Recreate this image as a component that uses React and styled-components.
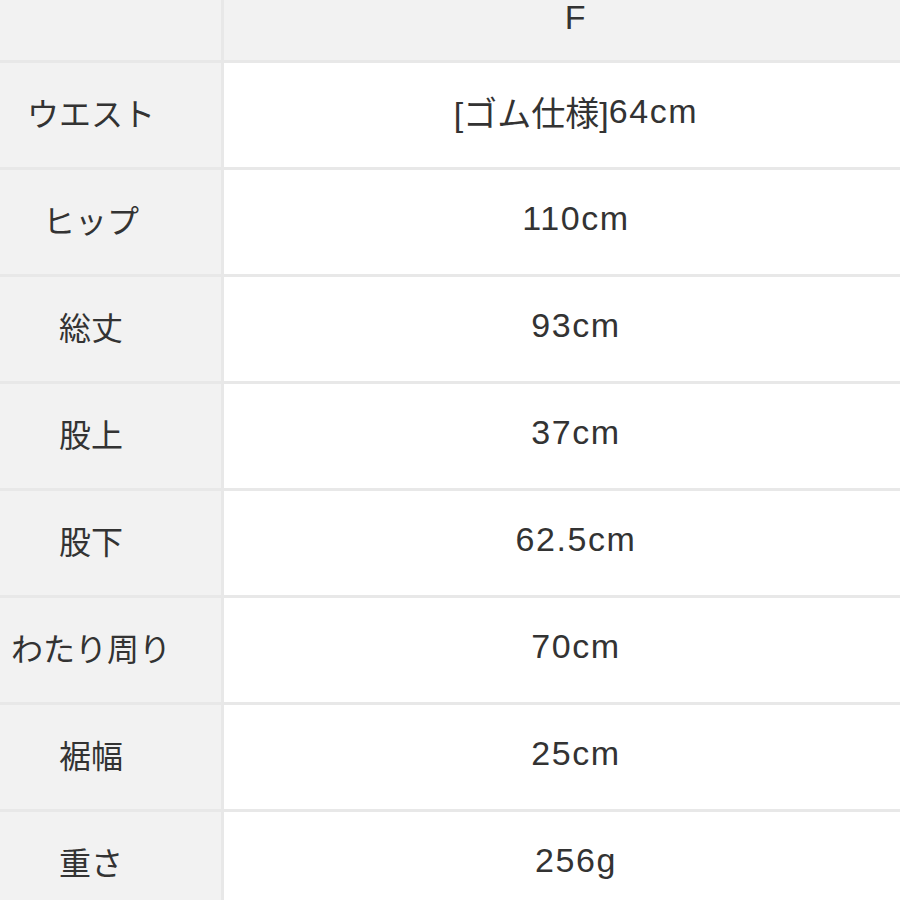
import React from 'react'
import styled, { createGlobalStyle } from 'styled-components'

const GlobalStyle = createGlobalStyle`
    html, body {
        margin: 0;
        padding: 0;
        background: #fff;
        overflow: hidden;
    }
    body {
        font-family: "Liberation Sans", "Noto Sans CJK JP", sans-serif;
        color: #333;
    }
`

const Page = styled.div`
    width: 900px;
    height: 900px;
    overflow: hidden;
`

const Table = styled.div`
    display: grid;
    grid-template-columns: 260px 704px;
    grid-template-rows: 86px;
    grid-auto-rows: 104px;
    gap: 3px;
    margin-left: -39px;
    margin-top: -26px;
    background: #e8e8e8;
    width: 967px;
`

const Cell = styled.div`
    display: flex;
    align-items: center;
    justify-content: center;
    box-sizing: border-box;
    padding-bottom: ${p => (p.$head ? '0' : '7px')};
    white-space: nowrap;
    font-size: ${p => (p.$label ? '32px' : '34px')};
    letter-spacing: ${p => (p.$label ? '0' : '1.6px')};
    background: ${p => (p.$label || p.$head ? '#f2f2f2' : '#fff')};
`

const Jp = styled.span`
    letter-spacing: 0;
`

const rows = [
    ['ウエスト', <><Jp>[ゴム仕様]</Jp>64cm</>],
    ['ヒップ', '110cm'],
    ['総丈', '93cm'],
    ['股上', '37cm'],
    ['股下', '62.5cm'],
    ['わたり周り', '70cm'],
    ['裾幅', '25cm'],
    ['重さ', '256g'],
]

export default function App() {
    return (
        <Page>
            <GlobalStyle />
            <Table>
                <Cell $head></Cell>
                <Cell $head>F</Cell>
                {rows.map(([label, value]) => (
                    <React.Fragment key={label}>
                        <Cell $label>{label}</Cell>
                        <Cell>{value}</Cell>
                    </React.Fragment>
                ))}
            </Table>
        </Page>
    )
}
